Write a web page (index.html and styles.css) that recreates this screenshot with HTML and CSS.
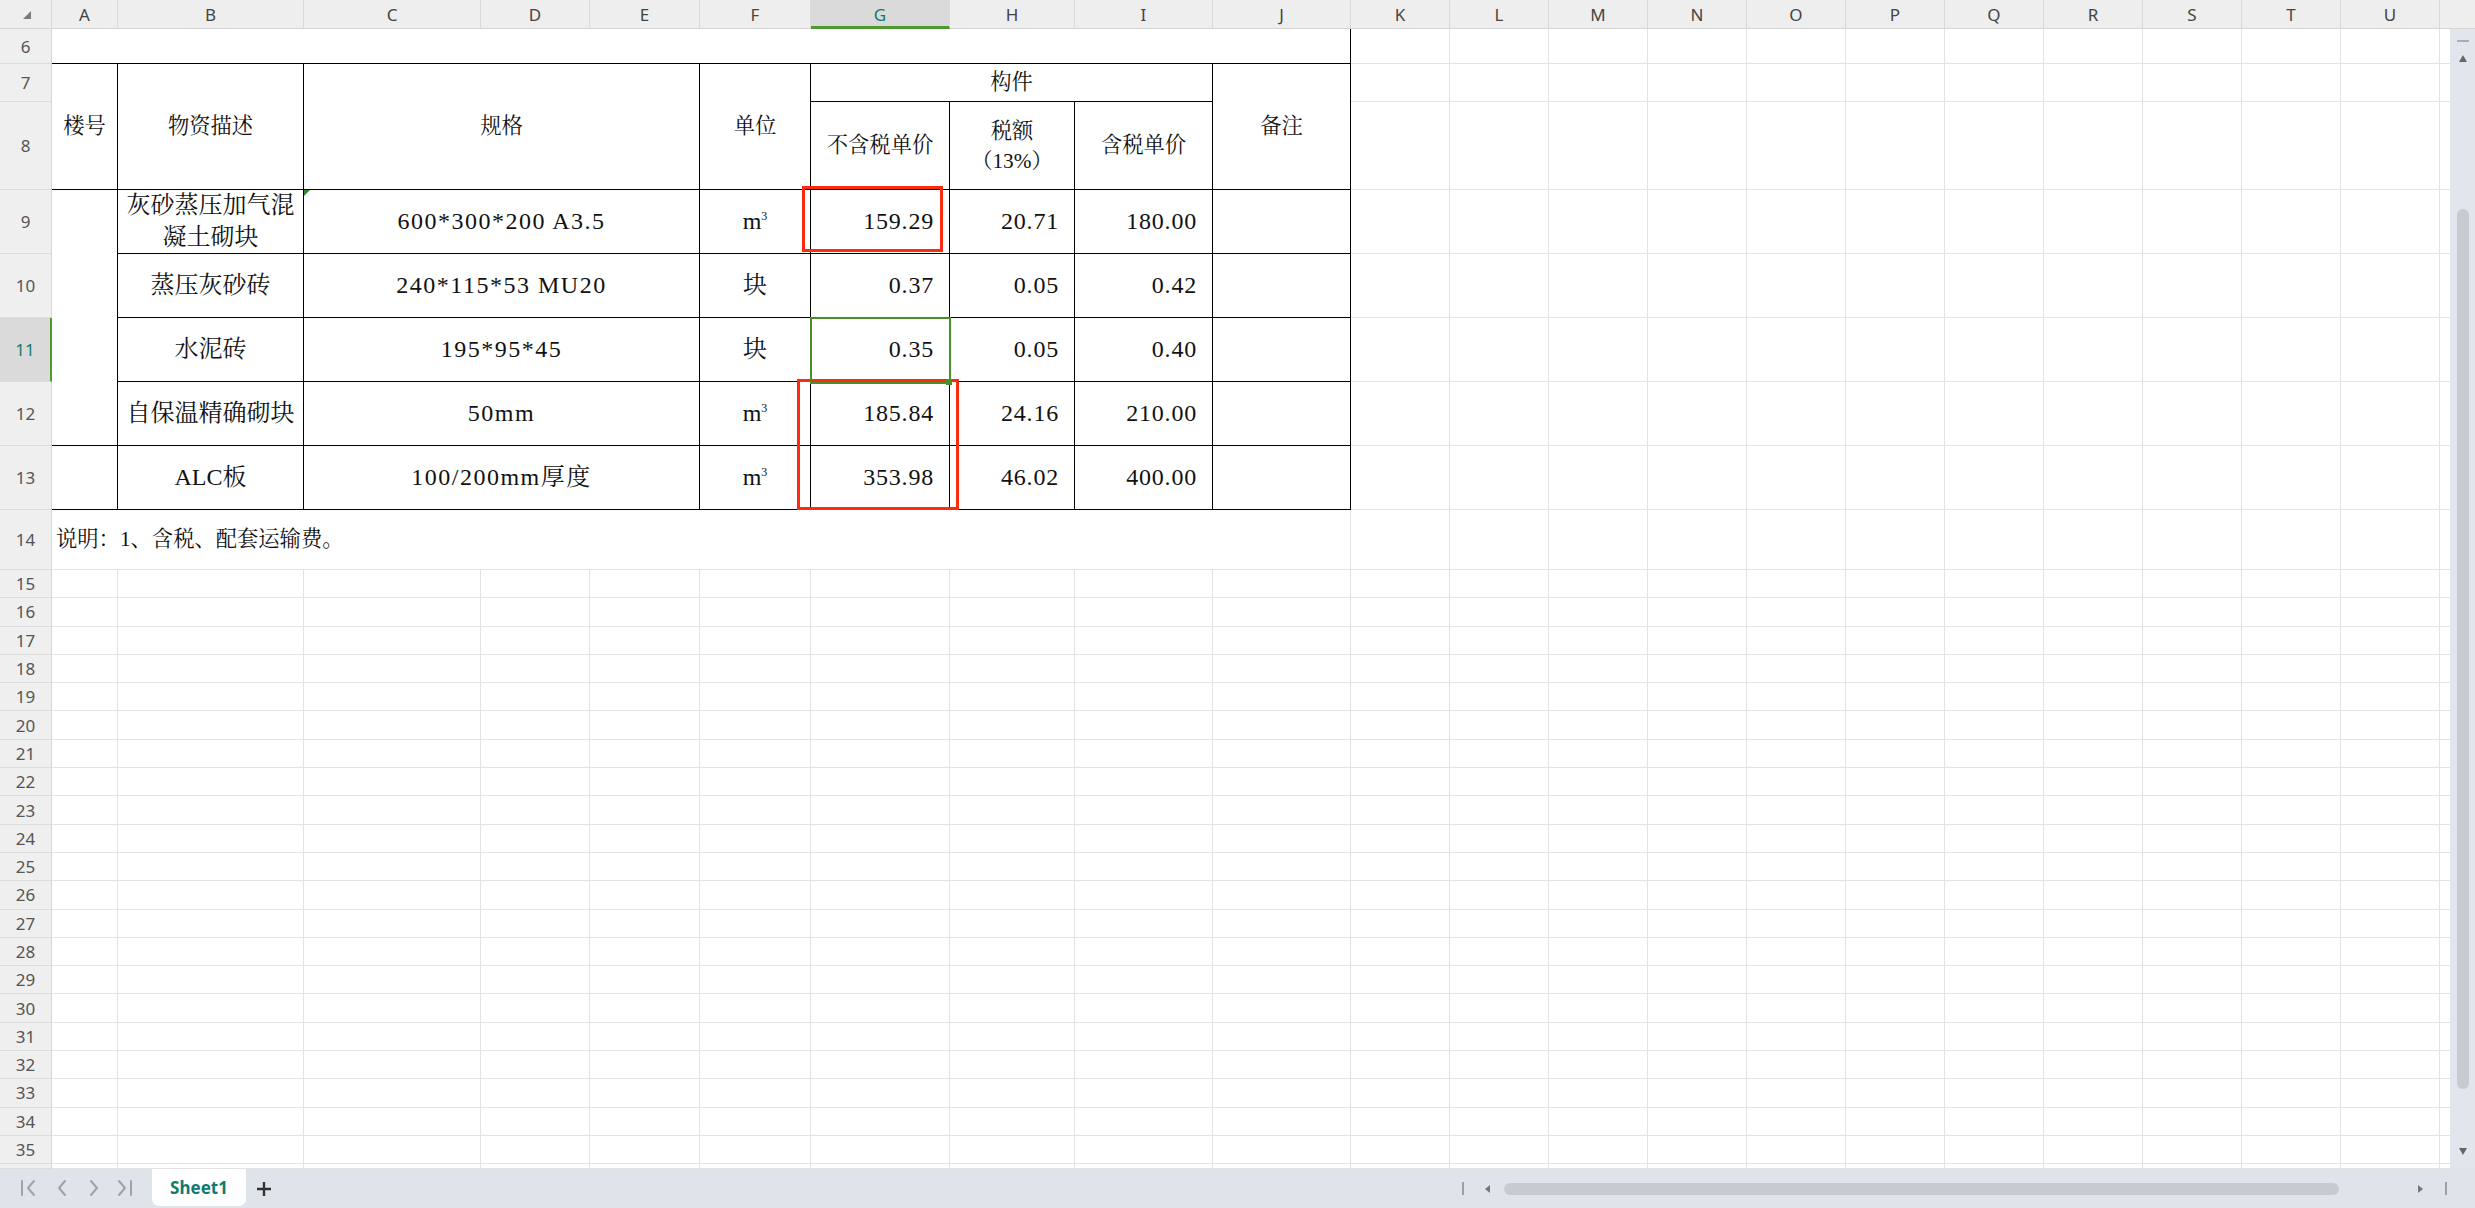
FILE: index.html
```html
<!DOCTYPE html>
<html lang="zh-CN">
<head>
<meta charset="utf-8">
<title>Sheet1</title>
<link rel="stylesheet" href="styles.css">
</head>
<body>
<div class="app">
  <div class="colhead">
    <div class="corner"><span class="corner-tri"></span></div>
    <div class="ch w-a">A</div>
    <div class="ch w-b">B</div>
    <div class="ch w-c">C</div>
    <div class="ch w-d">D</div>
    <div class="ch w-e">E</div>
    <div class="ch w-f">F</div>
    <div class="ch w-g sel">G</div>
    <div class="ch w-h">H</div>
    <div class="ch w-i">I</div>
    <div class="ch w-j">J</div>
    <div class="ch w-k">K</div>
    <div class="ch w-k">L</div>
    <div class="ch w-k">M</div>
    <div class="ch w-k">N</div>
    <div class="ch w-k">O</div>
    <div class="ch w-k">P</div>
    <div class="ch w-k">Q</div>
    <div class="ch w-k">R</div>
    <div class="ch w-k">S</div>
    <div class="ch w-k">T</div>
    <div class="ch w-k">U</div>
    <div class="ch ch-rest"></div>
  </div>

  <div class="sheetbody">
    <div class="gridarea">
      <div class="rows">
        <div class="row h35"><div class="rn">6</div><div class="rl"></div></div>
        <div class="row h38"><div class="rn">7</div><div class="rl"></div></div>
        <div class="row h88"><div class="rn">8</div><div class="rl"></div></div>
        <div class="row h64"><div class="rn">9</div><div class="rl"></div></div>
        <div class="row h64"><div class="rn">10</div><div class="rl"></div></div>
        <div class="row h64"><div class="rn sel">11</div><div class="rl"></div></div>
        <div class="row h64"><div class="rn">12</div><div class="rl"></div></div>
        <div class="row h64"><div class="rn">13</div><div class="rl"></div></div>
        <div class="row h60"><div class="rn">14</div><div class="rl"></div></div>
        <div class="row h28"><div class="rn">15</div><div class="rl"></div></div>
        <div class="row h28"><div class="rn">16</div><div class="rl"></div></div>
        <div class="row h28"><div class="rn">17</div><div class="rl"></div></div>
        <div class="row h28"><div class="rn">18</div><div class="rl"></div></div>
        <div class="row h28"><div class="rn">19</div><div class="rl"></div></div>
        <div class="row h28"><div class="rn">20</div><div class="rl"></div></div>
        <div class="row h28"><div class="rn">21</div><div class="rl"></div></div>
        <div class="row h28"><div class="rn">22</div><div class="rl"></div></div>
        <div class="row h28"><div class="rn">23</div><div class="rl"></div></div>
        <div class="row h28"><div class="rn">24</div><div class="rl"></div></div>
        <div class="row h28"><div class="rn">25</div><div class="rl"></div></div>
        <div class="row h28"><div class="rn">26</div><div class="rl"></div></div>
        <div class="row h28"><div class="rn">27</div><div class="rl"></div></div>
        <div class="row h28"><div class="rn">28</div><div class="rl"></div></div>
        <div class="row h28"><div class="rn">29</div><div class="rl"></div></div>
        <div class="row h28"><div class="rn">30</div><div class="rl"></div></div>
        <div class="row h28"><div class="rn">31</div><div class="rl"></div></div>
        <div class="row h28"><div class="rn">32</div><div class="rl"></div></div>
        <div class="row h28"><div class="rn">33</div><div class="rl"></div></div>
        <div class="row h28"><div class="rn">34</div><div class="rl"></div></div>
        <div class="row h28"><div class="rn">35</div><div class="rl"></div></div>
        <div class="row row-last"><div class="rn"></div><div class="rl"></div></div>
      </div>

      <div class="cols">
        <div class="col w-a"></div>
        <div class="col w-b"></div>
        <div class="col w-c"></div>
        <div class="col w-d"></div>
        <div class="col w-e"></div>
        <div class="col w-f"></div>
        <div class="col w-g"></div>
        <div class="col w-h"></div>
        <div class="col w-i"></div>
        <div class="col w-j"></div>
        <div class="col w-k"></div>
        <div class="col w-k"></div>
        <div class="col w-k"></div>
        <div class="col w-k"></div>
        <div class="col w-k"></div>
        <div class="col w-k"></div>
        <div class="col w-k"></div>
        <div class="col w-k"></div>
        <div class="col w-k"></div>
        <div class="col w-k"></div>
        <div class="col w-k"></div>
        <div class="col col-rest"></div>
      </div>

      <div class="tbl">
        <div class="td top call"></div>

        <div class="td hd r2">楼号</div>
        <div class="td hd r2">物资描述</div>
        <div class="td hd r2 c3">规格</div>
        <div class="td hd r2">单位</div>
        <div class="td hd c3">构件</div>
        <div class="td hd r2">备注</div>
        <div class="td hd">不含税单价</div>
        <div class="td hd"><span class="tx lh30">税额<br>（13%）</span></div>
        <div class="td hd">含税单价</div>

        <div class="td r4"></div>
        <div class="td"><span class="tx">灰砂蒸压加气混<br>凝土砌块</span></div>
        <div class="td c3 spec flag">600*300*200 A3.5</div>
        <div class="td"><span class="tx">m<sup>3</sup></span></div>
        <div class="td num">159.29</div>
        <div class="td num">20.71</div>
        <div class="td num">180.00</div>
        <div class="td"></div>

        <div class="td">蒸压灰砂砖</div>
        <div class="td c3 spec">240*115*53 MU20</div>
        <div class="td">块</div>
        <div class="td num">0.37</div>
        <div class="td num">0.05</div>
        <div class="td num">0.42</div>
        <div class="td"></div>

        <div class="td">水泥砖</div>
        <div class="td c3 spec">195*95*45</div>
        <div class="td">块</div>
        <div class="td num">0.35</div>
        <div class="td num">0.05</div>
        <div class="td num">0.40</div>
        <div class="td"></div>

        <div class="td">自保温精确砌块</div>
        <div class="td c3 spec">50mm</div>
        <div class="td"><span class="tx">m<sup>3</sup></span></div>
        <div class="td num">185.84</div>
        <div class="td num">24.16</div>
        <div class="td num">210.00</div>
        <div class="td"></div>

        <div class="td"></div>
        <div class="td">ALC板</div>
        <div class="td c3 spec">100/200mm厚度</div>
        <div class="td"><span class="tx">m<sup>3</sup></span></div>
        <div class="td num">353.98</div>
        <div class="td num">46.02</div>
        <div class="td num">400.00</div>
        <div class="td"></div>

        <div class="td note call">说明：1、含税、配套运输费。</div>
      </div>

      <div class="redbox rb1"></div>
      <div class="redbox rb2"></div>
      <div class="selbox"></div>
      <div class="handle"></div>
    </div>

    <div class="vscroll">
      <div class="vs-minus"></div>
      <div class="vs-up"></div>
      <div class="vs-thumb"></div>
      <div class="vs-down"></div>
    </div>
  </div>

  <div class="tabbar">
    <svg class="nav" width="140" height="39" viewBox="0 0 140 39">
      <g fill="none" stroke="#9ea3a8" stroke-width="2" stroke-linecap="round" stroke-linejoin="round">
        <path d="M22 12v14M34 12l-6 7 6 7"/>
        <path d="M65 12l-6 7 6 7"/>
        <path d="M91 12l6 7-6 7"/>
        <path d="M119 12l6 7-6 7M131 12v14"/>
      </g>
    </svg>
    <div class="tab">Sheet1</div>
    <svg class="plus" width="16" height="16" viewBox="0 0 16 16">
      <path d="M8 1v14M1 8h14" stroke="#333" stroke-width="2.4" fill="none"/>
    </svg>
    <div class="hscroll">
      <div class="hs-bar"></div>
      <div class="hs-left"></div>
      <div class="hs-thumb"></div>
      <div class="hs-right"></div>
      <div class="hs-bar hs-bar-end"></div>
    </div>
  </div>
</div>
</body>
</html>
```

FILE: styles.css
```css
* { box-sizing: border-box; }
html, body { margin: 0; padding: 0; }
body {
  width: 2475px;
  height: 1208px;
  overflow: hidden;
  background: #ffffff;
  font-family: "Noto Sans", "Liberation Sans", sans-serif;
}
.app {
  width: 2475px;
  height: 1208px;
  display: flex;
  flex-direction: column;
}

/* column header */
.colhead {
  display: flex;
  height: 29px;
  flex: none;
  background: #eeeeee;
}
.corner {
  width: 52px;
  flex: none;
  display: flex;
  align-items: center;
  justify-content: center;
  border-right: 1px solid #d9d9d9;
  border-bottom: 1px solid #d4d4d4;
}
.corner-tri {
  width: 0;
  height: 0;
  border-left: 8px solid transparent;
  border-bottom: 8px solid #7a7a7a;
  margin-left: 2px;
  margin-top: 1px;
}
.ch {
  flex: none;
  height: 29px;
  display: flex;
  align-items: center;
  justify-content: center;
  border-right: 1px solid #dadada;
  border-bottom: 1px solid #d4d4d4;
  font-size: 17px;
  color: #444;
}
.ch.sel {
  background: #dadada;
  color: #137b70;
  border-bottom: 3px solid #4e9a2e;
  padding-top: 2px;
}
.ch-rest { flex: 1; border-right: none; }

.w-a { width: 66px; }
.w-b { width: 186px; }
.w-c { width: 177px; }
.w-d { width: 109px; }
.w-e { width: 110px; }
.w-f { width: 111px; }
.w-g { width: 139px; }
.w-h { width: 125px; }
.w-i { width: 138px; }
.w-j { width: 138px; }
.w-k { width: 99px; }

/* sheet body */
.sheetbody {
  display: flex;
  height: 1140px;
  flex: none;
}
.gridarea {
  width: 2450px;
  flex: none;
  display: grid;
  grid-template-columns: 100%;
  grid-template-rows: 100%;
  position: relative;
  overflow: hidden;
}
.gridarea > .rows,
.gridarea > .cols,
.gridarea > .tbl { grid-area: 1 / 1; }

.rows {
  display: flex;
  flex-direction: column;
  min-height: 0;
}
.row { display: flex; flex: none; }
.h35 { height: 35px; }
.h38 { height: 38px; }
.h88 { height: 88px; }
.h64 { height: 64px; }
.h60 { height: 60px; }
.h28 { height: 28.3px; }
.row-last { flex: 1; }
.rn {
  width: 52px;
  flex: none;
  background: #efefef;
  border-right: 1px solid #d6d6d6;
  border-bottom: 1px solid #dcdcdc;
  display: flex;
  align-items: center;
  justify-content: center;
  font-size: 17px;
  color: #555;
  overflow: hidden;
}
.rn.sel {
  background: #dadada;
  color: #137b70;
  border-right: 2px solid #4e9a2e;
}
.rl { flex: 1; border-bottom: 1px solid #e3e3e3; }

.cols {
  display: flex;
  margin-left: 52px;
}
.col { flex: none; border-right: 1px solid #e3e3e3; }
.col-rest { flex: 1; border-right: none; }

/* data table */
.tbl {
  align-self: start;
  justify-self: start;
  margin-left: 52px;
  display: grid;
  grid-template-columns: 66px 186px 177px 109px 110px 111px 139px 125px 138px 138px;
  grid-template-rows: 35px 38px 88px 64px 64px 64px 64px 64px 60px;
  background: #ffffff;
  font-family: "Liberation Serif", "Noto Serif CJK SC", "Noto Sans CJK SC", serif;
  color: #111;
}
.td {
  border-right: 1px solid #000;
  border-bottom: 1px solid #000;
  display: flex;
  align-items: center;
  justify-content: center;
  text-align: center;
  font-size: 24px;
  line-height: 1.3;
  white-space: nowrap;
}
.hd { font-size: 21.3px; }
.num {
  justify-content: flex-end;
  padding-right: 15px;
  letter-spacing: 0.8px;
}
.spec { letter-spacing: 1.5px; }
.r2 { grid-row: span 2; }
.r4 { grid-row: span 4; }
.c3 { grid-column: span 3; }
.call { grid-column: 1 / -1; }
.top { border-right: 1px solid #000; border-bottom: 1px solid #000; }
.note {
  justify-content: flex-start;
  padding-left: 4px;
  font-size: 21.3px;
  border-right: 1px solid #e3e3e3;
  border-bottom: 1px solid #e3e3e3;
}
.tx { display: block; }
.lh30 { line-height: 30px; }
sup {
  font-size: 12px;
  line-height: 0;
  vertical-align: 9px;
}
.flag { position: relative; }
.flag::before {
  content: "";
  position: absolute;
  top: 0;
  left: 0;
  width: 0;
  height: 0;
  border-top: 6px solid #2f8a2f;
  border-right: 6px solid transparent;
}

/* annotation overlays */
.redbox {
  position: absolute;
  border: 3px solid #fb2c0e;
}
.rb1 { left: 802px; top: 157px; width: 141px; height: 66px; }
.rb2 { left: 797px; top: 350px; width: 162px; height: 131px; }
.selbox {
  position: absolute;
  left: 810px;
  top: 288px;
  width: 141px;
  height: 67px;
  border: 2px solid #4a8e2c;
}
.handle {
  position: absolute;
  left: 946px;
  top: 350px;
  width: 6px;
  height: 6px;
  background: #4a8e2c;
}

/* vertical scrollbar */
.vscroll {
  width: 25px;
  flex: none;
  background: #e1e6ec;
  display: flex;
  flex-direction: column;
  align-items: center;
  padding-top: 11px;
}
.vs-minus {
  width: 12px;
  height: 2px;
  background: #a9aeb3;
  flex: none;
}
.vs-up {
  margin-top: 13px;
  width: 0;
  height: 0;
  border-left: 4px solid transparent;
  border-right: 4px solid transparent;
  border-bottom: 7px solid #666;
  flex: none;
}
.vs-thumb {
  margin-top: 147px;
  width: 12px;
  height: 880px;
  border-radius: 6px;
  background: #c6cbd0;
  flex: none;
}
.vs-down {
  margin-top: 59px;
  width: 0;
  height: 0;
  border-left: 4px solid transparent;
  border-right: 4px solid transparent;
  border-top: 7px solid #666;
  flex: none;
}

/* bottom tab bar */
.tabbar {
  height: 39px;
  flex: none;
  display: flex;
  align-items: stretch;
  background: #dfe4ea;
}
.nav { flex: none; }
.tab {
  margin-left: 12px;
  width: 94px;
  flex: none;
  margin-bottom: 2px;
  background: #ffffff;
  border-radius: 0 0 7px 7px;
  display: flex;
  align-items: center;
  justify-content: center;
  font-size: 17px;
  font-weight: 700;
  color: #0d7b6f;
}
.plus {
  flex: none;
  align-self: center;
  margin-left: 10px;
}
.hscroll {
  margin-left: auto;
  margin-right: 28px;
  display: flex;
  align-items: center;
}
.hs-bar {
  width: 2px;
  height: 13px;
  background: #9aa0a6;
  flex: none;
}
.hs-left {
  margin-left: 21px;
  width: 0;
  height: 0;
  border-top: 4px solid transparent;
  border-bottom: 4px solid transparent;
  border-right: 5px solid #777;
  flex: none;
}
.hs-thumb {
  margin-left: 14px;
  width: 835px;
  height: 12px;
  border-radius: 6px;
  background: #c6cbd0;
  flex: none;
}
.hs-right {
  margin-left: 79px;
  width: 0;
  height: 0;
  border-top: 4px solid transparent;
  border-bottom: 4px solid transparent;
  border-left: 5px solid #777;
  flex: none;
}
.hs-bar-end { margin-left: 22px; }
```
